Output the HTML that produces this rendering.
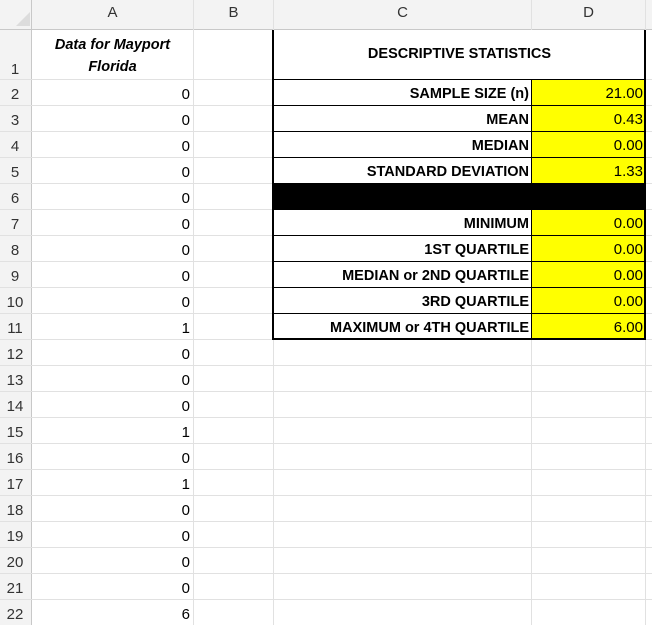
<!DOCTYPE html>
<html><head><meta charset="utf-8"><style>
*{margin:0;padding:0;box-sizing:border-box}
body{width:652px;height:625px;overflow:hidden;background:#fff;font-family:"Liberation Sans",Arial,sans-serif;position:relative}
.a{position:absolute}
.hl{position:absolute;left:0;width:652px;height:1px;background:#e1e1e1}
.vl{position:absolute;top:0;width:1px;height:625px;background:#e1e1e1}
.rn{position:absolute;left:0;width:30px;text-align:center;font-size:15px;color:#333;line-height:26px;height:26px;padding-top:2px}
.v{position:absolute;left:32px;width:158px;text-align:right;font-size:15px;line-height:26px;height:26px;padding-top:2px;color:#000}
.lab{position:absolute;left:274px;width:255px;text-align:right;font-size:14.5px;font-weight:bold;height:26px;line-height:26px;padding-top:1px}
.num{position:absolute;left:532px;width:113px;background:#ffff00;text-align:right;font-size:15px;height:25px;line-height:26px;padding-top:1px;padding-right:2px}
.bl{position:absolute;left:273px;width:373px;height:1px;background:#000}
</style></head><body>
<div class="a" style="left:0;top:0;width:652px;height:30px;background:#f3f3f3"></div>
<div class="a" style="left:0;top:0;width:32px;height:625px;background:#f3f3f3"></div>
<div class="a" style="left:16px;top:12px;width:0;height:0;border-left:14px solid transparent;border-bottom:14px solid #dcdcdc"></div>
<div class="hl" style="top:29px;background:#c8c8c8"></div>
<div class="vl" style="left:31px;background:#c8c8c8"></div>
<div class="vl" style="left:193px"></div>
<div class="vl" style="left:273px"></div>
<div class="vl" style="left:531px"></div>
<div class="vl" style="left:645px"></div>
<div class="a" style="left:32px;top:4px;width:161px;text-align:center;font-size:15px;color:#333">A</div>
<div class="a" style="left:194px;top:4px;width:79px;text-align:center;font-size:15px;color:#333">B</div>
<div class="a" style="left:274px;top:4px;width:257px;text-align:center;font-size:15px;color:#333">C</div>
<div class="a" style="left:532px;top:4px;width:113px;text-align:center;font-size:15px;color:#333">D</div>
<div class="hl" style="top:79px"></div><div class="hl" style="top:105px"></div><div class="hl" style="top:131px"></div><div class="hl" style="top:157px"></div><div class="hl" style="top:183px"></div><div class="hl" style="top:209px"></div><div class="hl" style="top:235px"></div><div class="hl" style="top:261px"></div><div class="hl" style="top:287px"></div><div class="hl" style="top:313px"></div><div class="hl" style="top:339px"></div><div class="hl" style="top:365px"></div><div class="hl" style="top:391px"></div><div class="hl" style="top:417px"></div><div class="hl" style="top:443px"></div><div class="hl" style="top:469px"></div><div class="hl" style="top:495px"></div><div class="hl" style="top:521px"></div><div class="hl" style="top:547px"></div><div class="hl" style="top:573px"></div><div class="hl" style="top:599px"></div>
<div class="rn" style="top:55px">1</div>
<div class="rn" style="top:80px">2</div><div class="rn" style="top:106px">3</div><div class="rn" style="top:132px">4</div><div class="rn" style="top:158px">5</div><div class="rn" style="top:184px">6</div><div class="rn" style="top:210px">7</div><div class="rn" style="top:236px">8</div><div class="rn" style="top:262px">9</div><div class="rn" style="top:288px">10</div><div class="rn" style="top:314px">11</div><div class="rn" style="top:340px">12</div><div class="rn" style="top:366px">13</div><div class="rn" style="top:392px">14</div><div class="rn" style="top:418px">15</div><div class="rn" style="top:444px">16</div><div class="rn" style="top:470px">17</div><div class="rn" style="top:496px">18</div><div class="rn" style="top:522px">19</div><div class="rn" style="top:548px">20</div><div class="rn" style="top:574px">21</div><div class="rn" style="top:600px">22</div>
<div class="a" style="left:32px;top:34px;width:161px;text-align:center;font-size:14.5px;font-weight:bold;font-style:italic;line-height:22px">Data for Mayport<br>Florida</div>
<div class="v" style="top:80px">0</div><div class="v" style="top:106px">0</div><div class="v" style="top:132px">0</div><div class="v" style="top:158px">0</div><div class="v" style="top:184px">0</div><div class="v" style="top:210px">0</div><div class="v" style="top:236px">0</div><div class="v" style="top:262px">0</div><div class="v" style="top:288px">0</div><div class="v" style="top:314px">1</div><div class="v" style="top:340px">0</div><div class="v" style="top:366px">0</div><div class="v" style="top:392px">0</div><div class="v" style="top:418px">1</div><div class="v" style="top:444px">0</div><div class="v" style="top:470px">1</div><div class="v" style="top:496px">0</div><div class="v" style="top:522px">0</div><div class="v" style="top:548px">0</div><div class="v" style="top:574px">0</div><div class="v" style="top:600px">6</div>
<div class="a" style="left:274px;top:30px;width:371px;height:310px;background:#fff"></div>
<div class="a" style="left:274px;top:46px;width:371px;text-align:center;font-size:14.5px;font-weight:bold">DESCRIPTIVE STATISTICS</div>
<div class="num" style="top:80px">21.00</div>
<div class="num" style="top:106px">0.43</div>
<div class="num" style="top:132px">0.00</div>
<div class="num" style="top:158px">1.33</div>
<div class="num" style="top:210px">0.00</div>
<div class="num" style="top:236px">0.00</div>
<div class="num" style="top:262px">0.00</div>
<div class="num" style="top:288px">0.00</div>
<div class="num" style="top:314px">6.00</div>
<div class="lab" style="top:80px">SAMPLE SIZE (n)</div>
<div class="lab" style="top:106px">MEAN</div>
<div class="lab" style="top:132px">MEDIAN</div>
<div class="lab" style="top:158px">STANDARD DEVIATION</div>
<div class="lab" style="top:210px">MINIMUM</div>
<div class="lab" style="top:236px">1ST QUARTILE</div>
<div class="lab" style="top:262px">MEDIAN or 2ND QUARTILE</div>
<div class="lab" style="top:288px">3RD QUARTILE</div>
<div class="lab" style="top:314px">MAXIMUM or 4TH QUARTILE</div>
<div class="a" style="left:273px;top:183px;width:373px;height:27px;background:#000"></div>
<div class="bl" style="top:79px"></div><div class="bl" style="top:105px"></div><div class="bl" style="top:131px"></div><div class="bl" style="top:157px"></div><div class="bl" style="top:235px"></div><div class="bl" style="top:261px"></div><div class="bl" style="top:287px"></div><div class="bl" style="top:313px"></div>
<div class="a" style="left:531px;top:79px;width:1px;height:260px;background:#000"></div>
<div class="a" style="left:272px;top:30px;width:2px;height:310px;background:#000"></div>
<div class="a" style="left:644px;top:30px;width:2px;height:310px;background:#000"></div>
<div class="a" style="left:272px;top:338px;width:374px;height:2px;background:#000"></div>
</body></html>
